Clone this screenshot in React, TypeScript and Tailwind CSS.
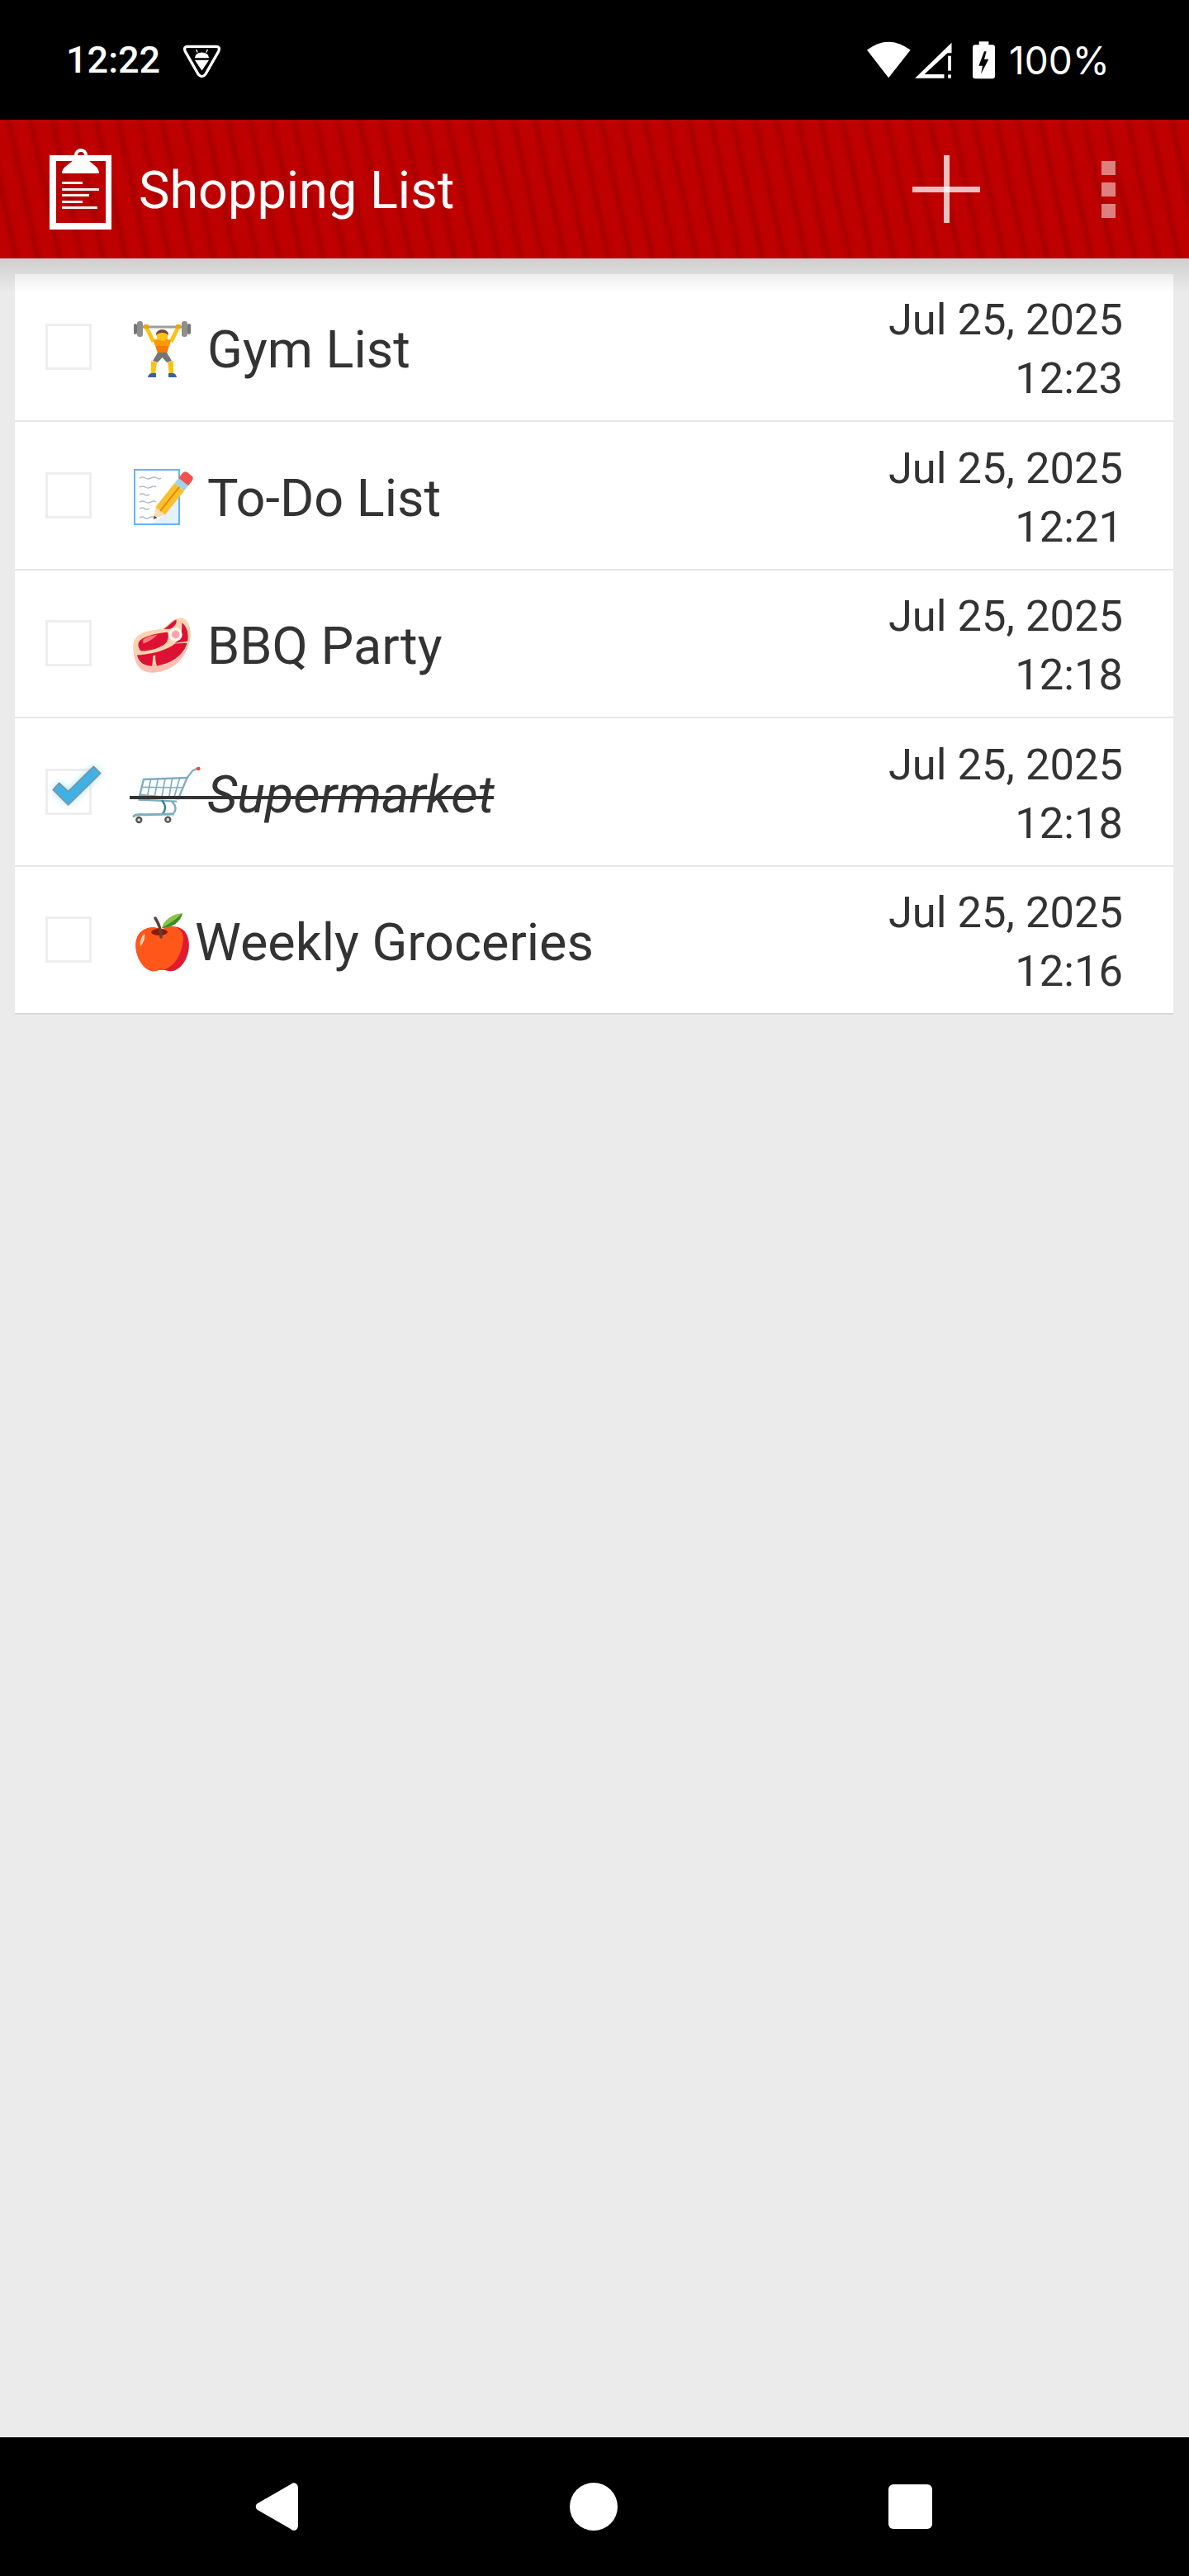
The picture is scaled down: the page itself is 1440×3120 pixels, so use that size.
import React from 'react';

interface ListRow {
  name: string;
  date: string;
  time: string;
  emoji: React.ReactNode;
  checked?: boolean;
  noSpace?: boolean;
}

// Status bar icons, drawn in the coordinates they were measured in
const SaverIcon = () => (
  <svg viewBox="30 70 140 130" className="w-[47px] h-[43px]">
    <path d="M48 80 H152 Q168 80 161 98 L113 182 Q100 198 87 182 L39 98 Q32 80 48 80Z" fill="none" stroke="#fff" strokeWidth="10" />
    <path d="M74 122 Q76 102 100 102 Q124 102 126 122Z" fill="#fff" />
    <path d="M84 102 L79 91 M116 102 L121 91" stroke="#fff" strokeWidth="4" />
    <path d="M74 130 H126 L100 168Z" fill="#fff" />
  </svg>
);

const WifiIcon = () => (
  <svg viewBox="27 60 160 134" className="w-[53px] h-[45px]">
    <path d="M27 91 Q105 31 186 91 L106 193Z" fill="#fff" />
  </svg>
);

const SignalIcon = () => (
  <svg viewBox="200 62 134 132" className="w-[45px] h-[44px]">
    <path d="M333 64 V102 H318 L234 179 H306 V193 H200Z" fill="#fff" />
    <rect x="320" y="112" width="11" height="54" fill="#fff" />
    <rect x="320" y="180" width="11" height="13" fill="#fff" />
  </svg>
);

const BatteryIcon = () => (
  <svg viewBox="408 58 81 136" className="w-[27px] h-[46px]">
    <path d="M431 58 H466 V70 H480 Q489 70 489 79 V184 Q489 193 480 193 H417 Q408 193 408 184 V79 Q408 70 417 70 H431Z" fill="#fff" />
    <path d="M450 94 L430 146 H444 L438 176 L466 122 H450 L458 94Z" fill="#000" />
  </svg>
);

const ClipboardIcon = () => (
  <svg viewBox="0 0 75 98" className="w-[75px] h-[98px]">
    <path d="M0 8 H75 V98 H0Z M8 15 V90 H68 V15Z" fill="#fff" fillRule="evenodd" />
    <circle cx="38" cy="8" r="6" fill="none" stroke="#fff" strokeWidth="4" />
    <path d="M15 30 C15 22 24 19 29 14 H47 C52 19 60 22 60 30Z" fill="#fff" />
    <rect x="15" y="40" width="25" height="3" fill="#eee" />
    <rect x="15" y="48" width="45" height="3" fill="#eee" />
    <rect x="15" y="55" width="33" height="3" fill="#eee" />
    <rect x="15" y="63" width="25" height="3" fill="#eee" />
    <rect x="15" y="70" width="43" height="3" fill="#eee" />
  </svg>
);

// List emoji, no colour emoji font is available so they are drawn
const Lifter = () => (
  <svg viewBox="0 0 92 76" className="w-[92px] h-[76px] overflow-visible">
    <path d="M20 10 L29 28" stroke="#fcc21b" strokeWidth="5" fill="none" />
    <path d="M59 10 L50 28" stroke="#fcc21b" strokeWidth="5" fill="none" />
    <rect x="14" y="8.5" width="51" height="3" fill="#9e9e9e" />
    <rect x="5" y="6" width="4" height="13" rx="2" fill="#757575" />
    <rect x="9" y="3" width="7" height="19" rx="3" fill="#8e8e8e" />
    <rect x="63" y="3" width="7" height="19" rx="3" fill="#8e8e8e" />
    <rect x="70" y="6" width="4" height="13" rx="2" fill="#757575" />
    <rect x="17" y="7" width="6" height="5" rx="1" fill="#eda600" />
    <rect x="56" y="7" width="6" height="5" rx="1" fill="#eda600" />
    <path d="M29 26 L50 26 L45 42 L34 42Z" fill="#f57c00" />
    <path d="M29 26 L36 24 L43 24 L50 26 L48 33 L31 33Z" fill="#ff9800" />
    <circle cx="39.5" cy="20" r="7" fill="#fcc21b" />
    <path d="M32 20 C31 11 48 11 47 20 C44 16 35 16 32 20Z" fill="#6d4c41" />
    <path d="M34 41 H45 L51 51 L45 53 L39.5 47 L34 53 L28 51Z" fill="#757575" />
    <path d="M26 51 L33 53 L31 67 H26Z" fill="#fcc21b" />
    <path d="M53 51 L46 53 L48 67 H53Z" fill="#fcc21b" />
    <path d="M22 71 Q23 66 27 66 H32 V71Z" fill="#3f5ea8" />
    <path d="M57 71 Q56 66 52 66 H47 V71Z" fill="#3f5ea8" />
  </svg>
);

const Memo = () => (
  <svg viewBox="0 0 92 76" className="w-[92px] h-[76px] overflow-visible">
    <rect x="6" y="3" width="54" height="66" fill="#fff" stroke="#64b5f6" strokeWidth="2" />
    <path d="M50 40 L59 30 V68 H26 Q44 60 50 40Z" fill="#e3f2fd" />
    <g stroke="#b0bec5" strokeWidth="1.5" fill="none">
      <path d="M12 13 q4 -2 7 0 t7 0 t7 0 t5 0" />
      <path d="M12 24 q4 -2 7 0 t7 0 t6 0" />
      <path d="M12 33 q4 -2 6 0 t6 0" />
      <path d="M12 42 q4 -2 7 0 t7 0 t6 0" />
      <path d="M12 50 q4 -2 6 0 t6 0" />
      <path d="M12 61 q4 -2 6 0 t6 0 t6 0" />
    </g>
    <g transform="translate(29 63) rotate(-51.5)">
      <path d="M0 0 L13 -7 V7Z" fill="#f5deb3" />
      <path d="M0 0 L4 -2.2 V2.2Z" fill="#5d4037" />
      <rect x="13" y="-7.5" width="37" height="15" fill="#fbc02d" />
      <rect x="13" y="-1" width="37" height="2" fill="#e68a00" />
      <rect x="50" y="-7.5" width="8" height="15" fill="#9fd3e8" />
      <path d="M58 -7.5 H65 Q70 -7.5 70 -3 V3 Q70 7.5 65 7.5 H58Z" fill="#ef5350" />
    </g>
  </svg>
);

const Steak = () => (
  <svg viewBox="0 0 92 76" className="w-[92px] h-[76px] overflow-visible">
    <g transform="translate(-17 -15.5) scale(0.3333)">
      <path d="M65 150 C70 125 95 110 120 105 L172 96 C190 85 205 60 235 57 C260 57 272 85 272 115 C272 160 245 215 200 238 C165 258 120 262 95 245 C72 230 62 190 65 150Z" fill="#ffbfb3" />
      <path d="M65 150 C70 125 95 110 120 105 L172 96 C190 85 205 60 235 57 C260 57 272 85 272 115 C272 160 240 200 200 218 C165 235 120 240 95 225 C75 212 62 180 65 150Z" fill="#fbd3b0" />
      <path d="M84 145 C95 125 135 116 188 108 C196 125 190 145 172 157 C150 170 110 180 92 176 C84 170 80 158 84 145Z" fill="#dd1133" />
      <path d="M175 97 C190 88 205 70 220 62 C225 75 215 88 198 97Z" fill="#dd1133" />
      <path d="M240 74 C258 84 266 110 262 142 L216 148 C232 135 245 110 240 74Z" fill="#dd1133" />
      <path d="M78 192 C110 190 175 182 216 150 L260 148 C250 185 210 222 150 231 C115 235 85 225 78 192Z" fill="#dd1133" />
      <path d="M132 232 C136 215 134 205 137 194 L145 193 C143 205 146 220 150 231Z" fill="#fbd3b0" />
      <path d="M100 135 C115 125 135 120 152 117 C140 132 118 145 100 150Z" fill="#ff7a7a" />
      <circle cx="218" cy="117" r="24" fill="#fff" />
      <circle cx="218" cy="117" r="15" fill="#ffa5a5" />
    </g>
  </svg>
);

const Cart = () => (
  <svg viewBox="0 0 92 76" className="w-[92px] h-[76px] overflow-visible">
    <g transform="translate(-107 -15) scale(0.3333)" fill="none" strokeLinecap="round">
      <path d="M372 102 L530 96 L498 172 L358 158Z" fill="#fff" stroke="#7fadc2" strokeWidth="7" />
      <g stroke="#7fadc2" strokeWidth="5">
        <path d="M365 130 L515 132" />
        <path d="M398 101 L386 161 M424 100 L412 163 M450 99 L438 166 M476 98 L464 168 M503 97 L482 170" />
      </g>
      <path d="M530 96 L550 70 L568 62" stroke="#7fadc2" strokeWidth="7" />
      <circle cx="571" cy="63" r="7" fill="#f44336" />
      <path d="M358 158 L356 176 L490 182" stroke="#7fadc2" strokeWidth="7" />
      <path d="M440 180 C456 200 452 215 440 228" stroke="#2e7d95" strokeWidth="7" />
      <path d="M476 184 C492 200 490 215 478 228" stroke="#7fadc2" strokeWidth="7" />
      <path d="M336 236 C345 228 360 230 372 230 L478 228" stroke="#7fadc2" strokeWidth="9" />
      <circle cx="355" cy="249" r="9" stroke="#555" strokeWidth="7" fill="#ddd" />
      <circle cx="460" cy="248" r="9" stroke="#555" strokeWidth="7" fill="#ddd" />
    </g>
  </svg>
);

const Apple = () => (
  <svg viewBox="0 0 79 76" className="w-[79px] h-[76px] overflow-visible">
    <path d="M39 22 C50 15 68 17 71 33 C75 50 65 70 52 72 C46 73 43 70 39 71 C35 70 32 73 26 72 C14 68 5 50 8 35 C11 20 28 16 39 22Z" fill="#e01b2f" />
    <path d="M36 21.5 C25 16 11 22 8 35 C5 50 14 68 26 72 C32 73 35 70 39 71 C55 68 64 50 65 32 C65 25 60 19 52 18 C47 18 42 21 36 21.5Z" fill="#ff5719" />
    <ellipse cx="36" cy="25" rx="10" ry="4" fill="#8a1c0a" />
    <path d="M38 31 C38 24 37 17 31 8" stroke="#5d4037" strokeWidth="3.5" fill="none" strokeLinecap="round" />
    <path d="M39 20 C41 10 52 3 64 2 C62 12 52 20 39 20Z" fill="#8bc34a" />
    <path d="M39 20 C47 15 56 10 64 2 C62 12 52 20 39 20Z" fill="#3d8b2a" />
    <path d="M18 27 C14 30 12 36 13 42 C17 38 19 32 18 27Z" fill="#ffcdb2" />
  </svg>
);

const rows: ListRow[] = [
  { name: 'Gym List', date: 'Jul 25, 2025', time: '12:23', emoji: <Lifter /> },
  { name: 'To-Do List', date: 'Jul 25, 2025', time: '12:21', emoji: <Memo /> },
  { name: 'BBQ Party', date: 'Jul 25, 2025', time: '12:18', emoji: <Steak /> },
  { name: 'Supermarket', date: 'Jul 25, 2025', time: '12:18', emoji: <Cart />, checked: true },
  { name: 'Weekly Groceries', date: 'Jul 25, 2025', time: '12:16', emoji: <Apple />, noSpace: true },
];

const Checkbox = ({ checked }: { checked?: boolean }) => (
  <div className="relative w-14 h-14 shrink-0 border-[3px] border-[#eeeeee]">
    {checked && (
      <svg viewBox="0 20 270 240" className="absolute -left-2 top-[-18px] w-[90px] h-20 overflow-visible">
        <defs>
          <filter id="glow" x="-40%" y="-40%" width="180%" height="180%">
            <feGaussianBlur stdDeviation="14" />
          </filter>
        </defs>
        <polygon points="65,117 98,148 190,57 215,82 98,197 43,142" fill="#8adcf8" filter="url(#glow)" />
        <polygon points="65,117 98,148 190,57 215,82 98,197 43,142" fill="#3fb2e5" stroke="#84929c" strokeWidth="5" strokeLinejoin="round" />
      </svg>
    )}
  </div>
);

const Row = ({ row, last }: { row: ListRow; last: boolean }) => (
  <div className={`flex items-center h-[179.5px] pl-[37px] pr-[61px] border-b-2 ${last ? 'border-[#d8d8d8]' : 'border-[#e6e6e6]'}`}>
    <Checkbox checked={row.checked} />
    <div className="relative flex items-center ml-[46px] flex-1 text-[63px] leading-[76px] text-[#333333]">
      <div className={`shrink-0 mt-2 ${row.noSpace ? 'w-[79px]' : 'w-[94px]'}`}>{row.emoji}</div>
      <span className={`mt-2 ${row.checked ? 'italic' : ''}`}>{row.name}</span>
      {row.checked && <div className="absolute left-0 top-[47px] w-[441px] h-1 bg-[#333333]" />}
    </div>
    <div className="mt-[6px] text-right text-[52.5px] leading-[71px] text-[#333333]">
      <div>{row.date}</div>
      <div>{row.time}</div>
    </div>
  </div>
);

export default function App() {
  return (
    <div className="flex flex-col w-[1440px] h-[3120px] overflow-hidden bg-[#ebebeb] [font-family:Roboto,sans-serif]">
      {/* Status bar */}
      <div className="flex items-center h-[145px] shrink-0 bg-black text-white pl-20 pr-[96px]">
        <span className="text-[45px] font-medium leading-none">12:22</span>
        <div className="ml-[27px] mt-1"><SaverIcon /></div>
        <div className="flex-1" />
        <WifiIcon />
        <div className="ml-[5px]"><SignalIcon /></div>
        <div className="ml-[25px]"><BatteryIcon /></div>
        <span className="ml-[17px] text-[46px] leading-none [font-family:Inter,sans-serif]">100%</span>
      </div>

      {/* App bar */}
      <div className="flex items-center h-[168px] shrink-0 pl-[60px] bg-[#bf0000] bg-[repeating-linear-gradient(78deg,#bf0000_0px,#bf0000_12px,#aa0000_19px,#bf0000_26px)]">
        <ClipboardIcon />
        <span className="ml-[33px] mt-[3px] text-[63px] leading-none text-white">Shopping List</span>
        <div className="flex-1" />
        <div className="relative w-[82px] h-[82px] mr-[147px]">
          <div className="absolute left-[38px] top-0 w-[7px] h-full bg-white/75" />
          <div className="absolute left-0 top-[38px] w-full h-[7px] bg-white/75" />
        </div>
        <div className="flex flex-col gap-[9px] mr-[89px]">
          <div className="w-[17px] h-[17px] bg-white/50" />
          <div className="w-[17px] h-[17px] bg-white/50" />
          <div className="w-[17px] h-[17px] bg-white/50" />
        </div>
      </div>

      {/* List */}
      <div className="relative flex-1 px-[18px] pt-[18.5px] pr-[19px]">
        <div className="absolute inset-x-0 top-0 h-[42px] bg-gradient-to-b from-black/[0.12] to-transparent" />
        <div className="bg-white">
          {rows.map((row, i) => (
            <Row key={row.name} row={row} last={i === rows.length - 1} />
          ))}
        </div>
      </div>

      {/* Navigation bar */}
      <div className="flex items-center h-[168px] shrink-0 bg-black pl-[309px]">
        <svg viewBox="0 0 52 58" className="w-[52px] h-[58px]">
          <path d="M52 6 V52 C52 57 47 60 43 56 L3 33 C0 31 0 27 3 25 L43 2 C47 -2 52 1 52 6Z" fill="#fff" />
        </svg>
        <div className="ml-[329px] w-[58px] h-[58px] rounded-full bg-white" />
        <div className="ml-[328px] w-[53px] h-[54px] rounded-md bg-white" />
      </div>
    </div>
  );
}
